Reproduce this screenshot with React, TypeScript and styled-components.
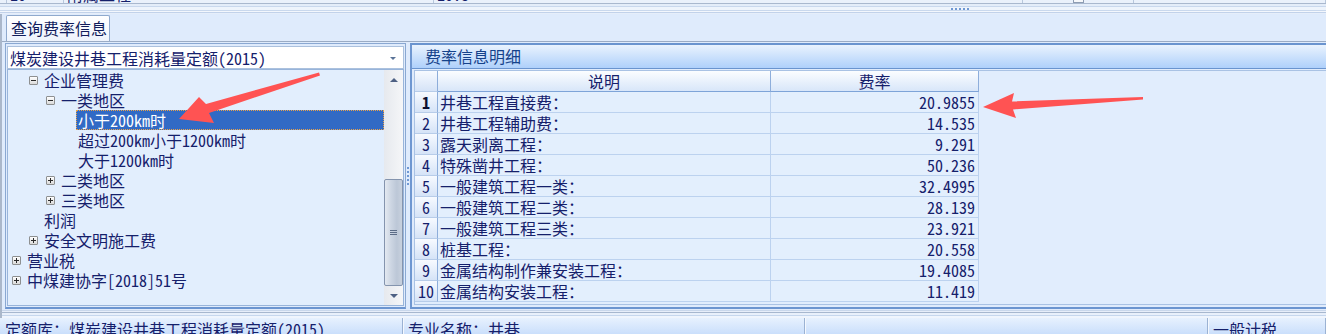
import React from "react";
import styled, { createGlobalStyle, css } from "styled-components";

const FONT = `"Noto Sans Mono CJK SC", "Noto Sans CJK SC", "Liberation Sans", sans-serif`;
const INK = "#15206b";

const Global = createGlobalStyle`
  html, body { margin: 0; padding: 0; background: #dfebfc; }
  body { font-family: ${FONT}; }
  * { box-sizing: border-box; }
`;

const Root = styled.div`
  position: relative;
  width: 1326px;
  height: 334px;
  overflow: hidden;
  background: #dfebfc;
  font-family: ${FONT};
  font-size: 16px;
  font-weight: 300;
  color: ${INK};
  display: flex;
  flex-direction: column;
`;

/* ---------- top grid strip (cut off) ---------- */
const TopStrip = styled.div`
  height: 4px;
  flex: none;
  overflow: hidden;
  background: #eaf1fb;
  border-bottom: 1px solid #a9b8ce;
`;
const TopRow = styled.div`
  display: flex;
  height: 20px;
  margin-top: -16px;
`;
const TopCell = styled.div<{ $w?: number; $center?: boolean }>`
  ${(p) => (p.$w ? `width: ${p.$w}px; flex: none;` : `flex: 1;`)}
  border-right: 1px solid #b8c7dc;
  padding: 0 3px;
  line-height: 20px;
  white-space: nowrap;
  display: flex;
  align-items: center;
  justify-content: ${(p) => (p.$center ? "center" : "flex-start")};
`;
const TinyCheck = styled.span`
  width: 11px;
  height: 11px;
  border: 1px solid #8e9db3;
  background: #f6f8fb;
  margin-top: 6px;
`;

/* ---------- horizontal splitter ---------- */
const HSplitter = styled.div`
  height: 10px;
  flex: none;
  display: flex;
  align-items: center;
  padding-left: 951px;
  gap: 2px;
  background: linear-gradient(
    to bottom,
    #e4edf9 0 2px,
    #c9d8ed 2px 3px,
    #eef4fc 3px 6px,
    #c9d8ed 6px 7px,
    #f3f7fd 7px 8px,
    #c2d2ea 8px 9px,
    #e6eefa 9px
  );
`;
const GripDot = styled.span`
  width: 2px;
  height: 2px;
  background: #6f98d4;
`;

/* ---------- middle section ---------- */
const Middle = styled.div`
  flex: none;
  display: flex;
  flex-direction: column;
  border-left: 2px solid #aab7ca;
`;

const TabBar = styled.div`
  height: 27px;
  display: flex;
  align-items: flex-end;
  padding-left: 4px;
`;
const Tab = styled.div`
  width: 104px;
  height: 26px;
  border: 1px solid #8fa9cd;
  border-bottom: none;
  border-radius: 2px 2px 0 0;
  background: linear-gradient(#ffffff, #edf3fd);
  padding-left: 4px;
  line-height: 25px;
  white-space: nowrap;
  color: #101c5c;
`;

const TabPage = styled.div`
  height: 268px;
  border-top: 1px solid #9aabc4;
  padding: 1px 0 0 3px;
  display: flex;
  overflow: hidden;
`;

/* ---------- left pane ---------- */
const LeftPane = styled.div`
  width: 401px;
  flex: none;
  border: 1px solid #8aa8d2;
  border-bottom: 2px solid #6c95d0;
  padding: 2px 1px 1px 1px;
  display: flex;
  flex-direction: column;
`;
const Combo = styled.div`
  height: 23px;
  flex: none;
  background: #ffffff;
  border: 1px solid #abc1de;
  display: flex;
  align-items: center;
  padding: 0 7px 0 2px;
  white-space: nowrap;
`;
const ComboText = styled.span`
  flex: 1;
`;
const ComboArrow = styled.span`
  width: 0;
  height: 0;
  border-left: 3px solid transparent;
  border-right: 3px solid transparent;
  border-top: 3px solid #5a7397;
  margin-top: 2px;
`;
const TreeBox = styled.div`
  height: 237px;
  flex: none;
  border: 1px solid #98b4da;
  background: #e2eefd;
  display: flex;
`;
const TreeList = styled.div`
  flex: 1;
  display: flex;
  flex-direction: column;
`;
const TreeRow = styled.div<{ $level: number }>`
  height: 20px;
  display: flex;
  align-items: center;
  padding-left: ${(p) => 4 + p.$level * 17}px;
  white-space: nowrap;
`;
const Expander = styled.span<{ $open: boolean }>`
  position: relative;
  width: 9px;
  height: 9px;
  flex: none;
  border: 1px solid #8e9091;
  border-radius: 1px;
  background: linear-gradient(#ffffff, #dadada);
  margin-right: 6px;
  &::before {
    content: "";
    position: absolute;
    left: 1px;
    top: 3px;
    width: 5px;
    height: 1px;
    background: #2a2a2a;
  }
  ${(p) =>
    !p.$open &&
    css`
      &::after {
        content: "";
        position: absolute;
        left: 3px;
        top: 1px;
        width: 1px;
        height: 5px;
        background: #2a2a2a;
      }
    `}
`;
const ExpanderSpace = styled.span`
  width: 15px;
  flex: none;
`;
const TreeLabel = styled.span<{ $selected?: boolean }>`
  height: 20px;
  line-height: 18px;
  ${(p) =>
    p.$selected
      ? css`
          flex: 1;
          margin-left: -2px;
          padding-left: 1px;
          background: #316ac5;
          color: #ffffff;
          border: 1px dotted #e9a24a;
        `
      : css`
          padding-top: 1px;
        `}
`;

const VScroll = styled.div`
  width: 19px;
  flex: none;
  display: flex;
  flex-direction: column;
  background: linear-gradient(to right, #e6e9ee, #f5f6f8);
`;
const ScrollBtn = styled.div`
  height: 19px;
  flex: none;
  display: flex;
  align-items: center;
  justify-content: center;
`;
const ArrowUp = styled.span`
  width: 0;
  height: 0;
  border-left: 4px solid transparent;
  border-right: 4px solid transparent;
  border-bottom: 4px solid #4d6083;
`;
const ArrowDown = styled.span`
  width: 0;
  height: 0;
  border-left: 4px solid transparent;
  border-right: 4px solid transparent;
  border-top: 4px solid #4d6083;
`;
const Track = styled.div`
  flex: 1;
  display: flex;
  flex-direction: column;
  justify-content: flex-end;
`;
const Thumb = styled.div`
  height: 107px;
  border: 1px solid #8494ae;
  border-radius: 2px;
  background: linear-gradient(to right, #e3e9f1 0%, #cdd6e3 35%, #bcc7d7 70%, #c8d1de 100%);
  display: flex;
  flex-direction: column;
  align-items: center;
  justify-content: center;
  gap: 1px;
`;
const GripLine = styled.span`
  width: 7px;
  height: 1px;
  background: #5c6c87;
`;

/* ---------- vertical splitter ---------- */
const VSplitter = styled.div`
  width: 4px;
  flex: none;
  display: flex;
  flex-direction: column;
  align-items: center;
  justify-content: center;
  gap: 2px;
`;

/* ---------- right pane ---------- */
const RightPane = styled.div`
  width: 930px;
  flex: none;
  border-top: 2px solid #6a94cf;
  border-left: 2px solid #6f97d1;
  border-bottom: 2px solid #6c95d0;
  display: flex;
  flex-direction: column;
`;
const PaneHeader = styled.div`
  height: 24px;
  flex: none;
  border-bottom: 1px solid #6a94cf;
  background: linear-gradient(#e9f3fe, #afd0fb);
  padding-left: 13px;
  line-height: 22px;
  color: #15428b;
  white-space: nowrap;
`;
const GridArea = styled.div`
  flex: 1;
  padding: 1px 0 2px 2px;
  background: #dfebfc;
`;
const GridControl = styled.div`
  height: 235px;
  border: 1px solid #a9c2e4;
  border-right: none;
  background: #e1edfd;
`;
const GridRow = styled.div`
  display: grid;
  grid-template-columns: 23px 333px 208px;
  height: 21px;
  width: 564px;
`;
const IndicatorCell = styled.div<{ $bold?: boolean }>`
  border-right: 1px solid #8dadda;
  border-bottom: 1px solid #b7cce9;
  background: linear-gradient(#f7faff, #d5e3f7);
  display: flex;
  align-items: center;
  justify-content: center;
  line-height: 20px;
  font-weight: ${(p) => (p.$bold ? 700 : 300)};
  color: ${(p) => (p.$bold ? "#0a0f30" : INK)};
`;
const HeadCell = styled.div`
  border-right: 1px solid #8eaedb;
  border-bottom: 1px solid #7ea4d8;
  background: linear-gradient(#fbfdff, #d8e6f9);
  text-align: center;
  line-height: 20px;
`;
const DataCell = styled.div<{ $num?: boolean }>`
  border-right: 1px solid #bcd2ef;
  border-bottom: 1px solid #bcd2ef;
  background: #e3effd;
  line-height: 20px;
  white-space: nowrap;
  padding: ${(p) => (p.$num ? "0 3px 0 0" : "0 0 0 2px")};
  text-align: ${(p) => (p.$num ? "right" : "left")};
`;

/* ---------- bottom ---------- */
const BottomLines = styled.div`
  height: 9px;
  background: linear-gradient(
    to bottom,
    #dfeafb 0 1px,
    #c9d7eb 1px 2px,
    #e7eefa 2px 3px,
    #a7b7ce 3px 4px,
    #e9f0fb 4px 6px,
    #c6d7ee 6px 7px,
    #f0f5fd 7px 9px
  );
`;
const StatusBar = styled.div`
  height: 24px;
  flex: none;
  display: flex;
  background: linear-gradient(#e7f1fe, #bcd6fa);
  white-space: nowrap;
`;
const StatusSection = styled.div<{ $w?: number }>`
  ${(p) => (p.$w ? `width: ${p.$w}px; flex: none;` : `flex: 1;`)}
  border-right: 1px solid #9bb2d3;
  box-shadow: 1px 0 0 #f4f8fe;
  padding-left: 5px;
  line-height: 23px;
`;

/* ---------- overlay arrows ---------- */
const Overlay = styled.svg`
  position: absolute;
  left: 0;
  top: 0;
  pointer-events: none;
`;

type Node = { label: string; level: number; exp?: "open" | "closed"; selected?: boolean };
const tree: Node[] = [
  { label: "企业管理费", level: 1, exp: "open" },
  { label: "一类地区", level: 2, exp: "open" },
  { label: "小于200km时", level: 3, selected: true },
  { label: "超过200km小于1200km时", level: 3 },
  { label: "大于1200km时", level: 3 },
  { label: "二类地区", level: 2, exp: "closed" },
  { label: "三类地区", level: 2, exp: "closed" },
  { label: "利润", level: 1 },
  { label: "安全文明施工费", level: 1, exp: "closed" },
  { label: "营业税", level: 0, exp: "closed" },
  { label: "中煤建协字[2018]51号", level: 0, exp: "closed" },
];

const rows: [string, string][] = [
  ["井巷工程直接费：", "20.9855"],
  ["井巷工程辅助费：", "14.535"],
  ["露天剥离工程：", "9.291"],
  ["特殊凿井工程：", "50.236"],
  ["一般建筑工程一类：", "32.4995"],
  ["一般建筑工程二类：", "28.139"],
  ["一般建筑工程三类：", "23.921"],
  ["桩基工程：", "20.558"],
  ["金属结构制作兼安装工程：", "19.4085"],
  ["金属结构安装工程：", "11.419"],
];

export default function App() {
  return (
    <Root>
      <Global />
      <TopStrip>
        <TopRow>
          <TopCell $w={4} />
          <TopCell $w={57}>10</TopCell>
          <TopCell $w={370}>附属工程</TopCell>
          <TopCell $w={589}>10.8</TopCell>
          <TopCell $w={111} $center>
            <TinyCheck />
          </TopCell>
          <TopCell />
        </TopRow>
      </TopStrip>
      <HSplitter>
        {[0, 1, 2, 3, 4].map((i) => (
          <GripDot key={i} />
        ))}
      </HSplitter>
      <Middle>
        <TabBar>
          <Tab>查询费率信息</Tab>
        </TabBar>
        <TabPage>
          <LeftPane>
            <Combo>
              <ComboText>煤炭建设井巷工程消耗量定额(2015)</ComboText>
              <ComboArrow />
            </Combo>
            <TreeBox>
              <TreeList>
                {tree.map((n) => (
                  <TreeRow key={n.label} $level={n.level}>
                    {n.exp ? <Expander $open={n.exp === "open"} /> : <ExpanderSpace />}
                    <TreeLabel $selected={n.selected}>{n.label}</TreeLabel>
                  </TreeRow>
                ))}
              </TreeList>
              <VScroll>
                <ScrollBtn>
                  <ArrowUp />
                </ScrollBtn>
                <Track>
                  <Thumb>
                    <GripLine />
                    <GripLine />
                    <GripLine />
                  </Thumb>
                </Track>
                <ScrollBtn>
                  <ArrowDown />
                </ScrollBtn>
              </VScroll>
            </TreeBox>
          </LeftPane>
          <VSplitter>
            {[0, 1, 2, 3, 4].map((i) => (
              <GripDot key={i} />
            ))}
          </VSplitter>
          <RightPane>
            <PaneHeader>费率信息明细</PaneHeader>
            <GridArea>
              <GridControl>
                <GridRow>
                  <IndicatorCell />
                  <HeadCell>说明</HeadCell>
                  <HeadCell>费率</HeadCell>
                </GridRow>
                {rows.map(([name, rate], i) => (
                  <GridRow key={name}>
                    <IndicatorCell $bold={i === 0}>{i + 1}</IndicatorCell>
                    <DataCell>{name}</DataCell>
                    <DataCell $num>{rate}</DataCell>
                  </GridRow>
                ))}
              </GridControl>
            </GridArea>
          </RightPane>
        </TabPage>
        <BottomLines />
      </Middle>
      <StatusBar>
        <StatusSection $w={403}>定额库：煤炭建设井巷工程消耗量定额(2015)</StatusSection>
        <StatusSection $w={402}>专业名称：井巷</StatusSection>
        <StatusSection $w={403} />
        <StatusSection>一般计税</StatusSection>
      </StatusBar>
      <Overlay width={1326} height={334} viewBox="0 0 1326 334">
        <polygon
          fill="#ff5353"
          points="179,119 199,97 206,104 319,72.5 320,75.5 209,113 214,123"
        />
        <polygon
          fill="#ff5353"
          points="983,107 1014,93 1012,101.5 1143,97 1143,99.5 1013,109.5 1016,118"
        />
      </Overlay>
    </Root>
  );
}
